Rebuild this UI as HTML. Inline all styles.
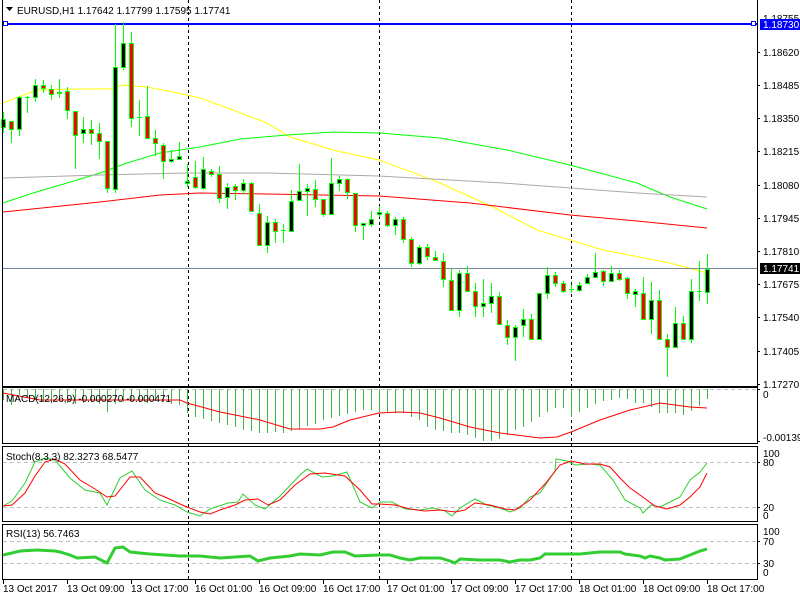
<!DOCTYPE html>
<html><head><meta charset="utf-8"><style>
html,body{margin:0;padding:0;background:#fff;width:800px;height:600px;overflow:hidden}
svg{display:block;font-family:"Liberation Sans",sans-serif;font-size:10px}
</style></head><body>
<svg id="s" width="800" height="600" viewBox="0 0 800 600" xmlns="http://www.w3.org/2000/svg">
<rect width="800" height="600" fill="#fff"/>
<g id="g"></g>
<!-- frames -->
<g stroke="#000" fill="none" stroke-width="1">
<path d="M2.5 0V386.5H757.5V0"/>
<rect x="2.5" y="387.5" width="755" height="56"/>
<rect x="2.5" y="446.5" width="755" height="75"/>
<rect x="2.5" y="524.5" width="755" height="55"/>
</g>
<!-- header text -->
<path d="M6 7h7l-3.5 4z" fill="#000"/>
<text x="17" y="14" fill="#000">EURUSD,H1  1.17642 1.17799 1.17595 1.17741</text>
<text x="6" y="402" fill="#000">MACD(12,26,9) -0.000270 -0.000471</text>
<text x="6" y="460" fill="#000">Stoch(8,3,3) 82.3273 68.5477</text>
<text x="6" y="537" fill="#000">RSI(13) 56.7463</text>
<!-- right axis -->
<g fill="#000">
<text x="763" y="22">1.18755</text>
<rect x="760" y="19" width="40" height="11" fill="#0000ff"/>
<text x="763" y="28" fill="#fff">1.18730</text>
<text x="763" y="56">1.18620</text>
<text x="763" y="89">1.18485</text>
<text x="763" y="122">1.18350</text>
<text x="763" y="155">1.18215</text>
<text x="763" y="189">1.18080</text>
<text x="763" y="222">1.17945</text>
<text x="763" y="255">1.17810</text>
<text x="763" y="288">1.17675</text>
<rect x="760" y="263" width="40" height="11" fill="#000"/>
<text x="763" y="272" fill="#fff">1.17741</text>
<text x="763" y="321">1.17540</text>
<text x="763" y="355">1.17405</text>
<text x="763" y="388">1.17270</text>
<text x="763" y="398">0</text>
<text x="763" y="441">-0.001393</text>
<text x="763" y="457">100</text>
<text x="763" y="466">80</text>
<text x="763" y="511">20</text>
<text x="763" y="519">0</text>
<text x="763" y="535">100</text>
<text x="763" y="545">70</text>
<text x="763" y="567">30</text>
<text x="763" y="576">0</text>
</g>
<g stroke="#000"><path d="M757 52.5h3M757 85.5h3M757 118.5h3M757 151.5h3M757 185.5h3M757 218.5h3M757 251.5h3M757 284.5h3M757 317.5h3M757 351.5h3M757 384.5h3M757 389.5h3M757 441.5h3M757 462.5h3M757 507.5h3M757 541.5h3M757 563.5h3"/></g>
<!-- time axis -->
<g fill="#000">
<text x="3" y="592">13 Oct 2017</text>
<text x="67" y="592">13 Oct 09:00</text>
<text x="131" y="592">13 Oct 17:00</text>
<text x="195" y="592">16 Oct 01:00</text>
<text x="259" y="592">16 Oct 09:00</text>
<text x="323" y="592">16 Oct 17:00</text>
<text x="387" y="592">17 Oct 01:00</text>
<text x="451" y="592">17 Oct 09:00</text>
<text x="515" y="592">17 Oct 17:00</text>
<text x="579" y="592">18 Oct 01:00</text>
<text x="643" y="592">18 Oct 09:00</text>
<text x="707" y="592">18 Oct 17:00</text>
</g>
<g stroke="#000"><path d="M3.5 580v4M67.5 580v4M131.5 580v4M195.5 580v4M259.5 580v4M323.5 580v4M387.5 580v4M451.5 580v4M515.5 580v4M579.5 580v4M643.5 580v4M707.5 580v4"/></g>
</svg>
<script>
var g=document.getElementById('g'),h='';
function L(pts,c,w){h+='<polyline fill="none" stroke="'+c+'" stroke-width="'+(w||1)+'" points="'+pts.map(function(p){return p.join(',')}).join(' ')+'"/>';}
// level lines
h+='<g stroke="#c0c0c0" stroke-dasharray="4,3"><path d="M3 389.5H757M3 462.5H757M3 507.5H757M3 541.5H757M3 563.5H757"/></g>';
// vertical separators
h+='<g stroke="#000" stroke-dasharray="3,3"><path d="M188.5 0V580M379.5 0V580M571.5 0V580"/></g>';
// MAs
L([[3,103],[37,90],[77,89],[110,89],[123,85],[147,87],[173,92],[200,98],[233,110],[267,123],[290,137],[333,150],[379,160],[433,180],[493,207],[537,230],[570,240],[603,250],[670,263],[707,273]],'#ffff00');
L([[3,203],[33,193],[67,183],[100,173],[127,163],[160,153],[200,147],[240,139],[287,135],[333,132],[379,133],[440,138],[507,150],[570,165],[637,183],[670,197],[707,209]],'#00ff00');
L([[3,178],[100,175],[187,173],[267,173],[379,176],[503,183],[637,193],[707,197]],'#a9a9a9');
L([[3,212],[100,202],[160,195],[200,193],[267,194],[379,196],[470,203],[570,215],[637,221],[707,228]],'#ff0000');
// price line & blue line
h+='<path d="M3 268.5H757" stroke="#778899"/>';
h+='<path d="M3 24H757" stroke="#0000ff" stroke-width="2"/>';
h+='<rect x="3.5" y="21.5" width="4" height="4" fill="#fff" stroke="#0000ff"/><rect x="751.5" y="21.5" width="4" height="4" fill="#fff" stroke="#0000ff"/>';
// candles: top,bottom,high,low,type
var C=[[119,127,112,133,'b'],[121,129,121,143,'r'],[97,129,96,136,'b'],[97,97,96,113,'d'],[85,97,79,102,'b'],[85,88,80,93,'r'],[89,94,85,100,'r'],[92,93,79,98,'b'],[91,110,87,119,'r'],[111,135,111,169,'r'],[129,133,117,143,'b'],[129,133,120,145,'r'],[133,141,123,159,'r'],[141,188,141,193,'r'],[67,189,24,193,'b'],[43,67,22,70,'b'],[43,118,32,127,'r'],[117,117,100,136,'d'],[116,138,86,138,'r'],[138,143,130,156,'r'],[145,161,143,179,'r'],[159,161,150,163,'b'],[156,159,142,160,'b'],[181,183,164,187,'b'],[177,187,161,189,'r'],[169,188,157,190,'b'],[171,174,169,177,'r'],[174,198,166,203,'r'],[187,197,183,209,'b'],[186,190,184,200,'r'],[183,190,179,194,'b'],[183,211,182,211,'r'],[213,245,204,245,'r'],[222,245,216,253,'b'],[222,231,219,243,'r'],[230,230,224,243,'d'],[201,231,190,231,'b'],[191,200,164,200,'b'],[188,191,184,216,'b'],[189,199,180,207,'r'],[199,214,199,217,'r'],[183,214,158,214,'b'],[179,183,176,191,'b'],[179,192,178,199,'r'],[193,225,193,232,'r'],[223,225,223,240,'b'],[219,224,211,227,'b'],[212,214,206,217,'b'],[213,225,211,227,'r'],[219,225,217,235,'b'],[219,239,217,243,'r'],[239,263,237,267,'r'],[247,263,245,265,'b'],[247,256,244,260,'r'],[257,260,251,261,'r'],[261,279,253,287,'r'],[280,310,269,310,'r'],[273,310,270,317,'b'],[273,291,266,291,'r'],[291,306,283,317,'r'],[303,306,279,317,'b'],[296,303,283,313,'b'],[296,324,292,324,'r'],[325,337,320,345,'r'],[327,337,325,361,'b'],[319,325,309,337,'b'],[319,339,314,340,'r'],[293,339,293,340,'b'],[275,293,267,299,'b'],[275,283,272,287,'r'],[283,291,281,293,'r'],[289,289,285,293,'d'],[285,290,282,292,'b'],[277,283,274,284,'b'],[272,277,253,278,'b'],[271,281,270,286,'r'],[273,281,266,281,'b'],[273,279,270,281,'r'],[278,293,277,299,'r'],[291,294,289,307,'b'],[293,319,277,319,'r'],[300,319,282,334,'b'],[300,339,290,339,'r'],[339,347,334,377,'r'],[323,347,307,348,'b'],[323,339,316,340,'r'],[291,339,279,343,'b'],[291,291,261,301,'d'],[269,292,254,304,'b']];
var s='';
C.forEach(function(c,i){var x=3+8*i;
 s+='<path d="M'+(x+.5)+' '+c[2]+'V'+c[3]+'" stroke="#00ff00"/>';
 if(c[4]=='d'){s+='<path d="M'+(x-2)+' '+(c[0]+.5)+'h5" stroke="#00ff00"/>';}
 else s+='<rect x="'+(x-1.5)+'" y="'+(c[0]+.5)+'" width="4" height="'+Math.max(1,c[1]-c[0])+'" fill="'+(c[4]=='b'?'#000':'#ff0000')+'" stroke="#00ff00"/>';
});
h+=s;
// MACD histogram
var M=[400,405,395,398,400,401,402,400,403,404,403,402,404,412,404,402,401,402,403,401,402,404,405,413,417,419,421,423,425,427,430,431,433,433,432,433,431,429,426,424,420,418,416,414,412,410,410,412,412,413,413,417,420,427,430,431,433,433,435,438,441,441,439,435,430,427,422,417,412,408,408,417,412,408,404,401,400,398,399,403,403,407,413,413,413,415,411,406,399];
s='';M.forEach(function(v,i){var x=3+8*i;s+='<path d="M'+(x+.5)+' 389V'+v+'" stroke="#3cb83c"/>';});h+=s;
L([[3,393],[40,400],[100,400],[180,400],[187,403],[220,412],[260,420],[290,429],[320,429],[333,427],[350,420],[379,413],[400,412],[420,413],[440,418],[470,427],[500,433],[540,438],[557,437],[571,432],[600,420],[630,410],[660,403],[690,407],[707,408]],'#ff0000');
// Stoch
L([[3,506],[12,501],[25,483],[35,462],[45,458],[55,460],[70,478],[85,490],[100,493],[107,505],[120,478],[132,471],[145,490],[160,500],[175,505],[187,512],[200,516],[210,509],[228,503],[238,502],[243,494],[255,505],[265,509],[280,496],[300,475],[307,469],[322,477],[333,476],[347,472],[360,502],[372,508],[380,502],[392,502],[405,509],[420,510],[433,508],[445,511],[452,516],[460,508],[475,499],[487,505],[500,508],[510,512],[520,508],[530,497],[540,493],[555,471],[556,459],[567,461],[575,465],[590,464],[600,465],[613,480],[625,500],[640,508],[643,513],[651,505],[660,507],[670,502],[680,497],[690,480],[700,472],[707,463]],'#32cd32');
L([[3,506],[12,505],[25,493],[35,476],[45,462],[55,459],[65,464],[80,480],[95,489],[107,497],[115,496],[130,477],[140,477],[155,493],[165,497],[180,504],[187,507],[200,512],[210,514],[220,510],[235,505],[245,500],[258,499],[268,505],[280,500],[295,485],[310,474],[325,473],[345,476],[360,490],[372,504],[380,504],[395,505],[410,509],[425,511],[440,510],[455,512],[465,510],[475,503],[490,505],[505,509],[515,510],[530,500],[545,484],[560,465],[571,461],[585,464],[600,464],[610,467],[620,478],[630,488],[640,495],[655,506],[667,509],[680,505],[690,497],[700,487],[707,473]],'#ff0000');
// RSI
L([[3,555],[12,553],[20,551],[37,550],[55,551],[60,552],[70,555],[77,558],[95,557],[107,563],[115,548],[123,547],[130,552],[150,554],[180,556],[200,556],[220,558],[250,556],[258,561],[270,558],[290,556],[300,554],[320,555],[333,552],[345,552],[355,556],[379,555],[390,555],[400,558],[410,560],[420,558],[440,558],[450,561],[455,563],[460,559],[480,560],[500,560],[510,562],[520,560],[530,560],[540,558],[545,554],[560,554],[580,554],[590,553],[600,552],[620,552],[625,554],[640,556],[645,558],[650,556],[660,558],[665,560],[680,559],[690,555],[700,551],[707,549]],'#32cd32',3);
g.innerHTML=h;
</script>
</body></html>
